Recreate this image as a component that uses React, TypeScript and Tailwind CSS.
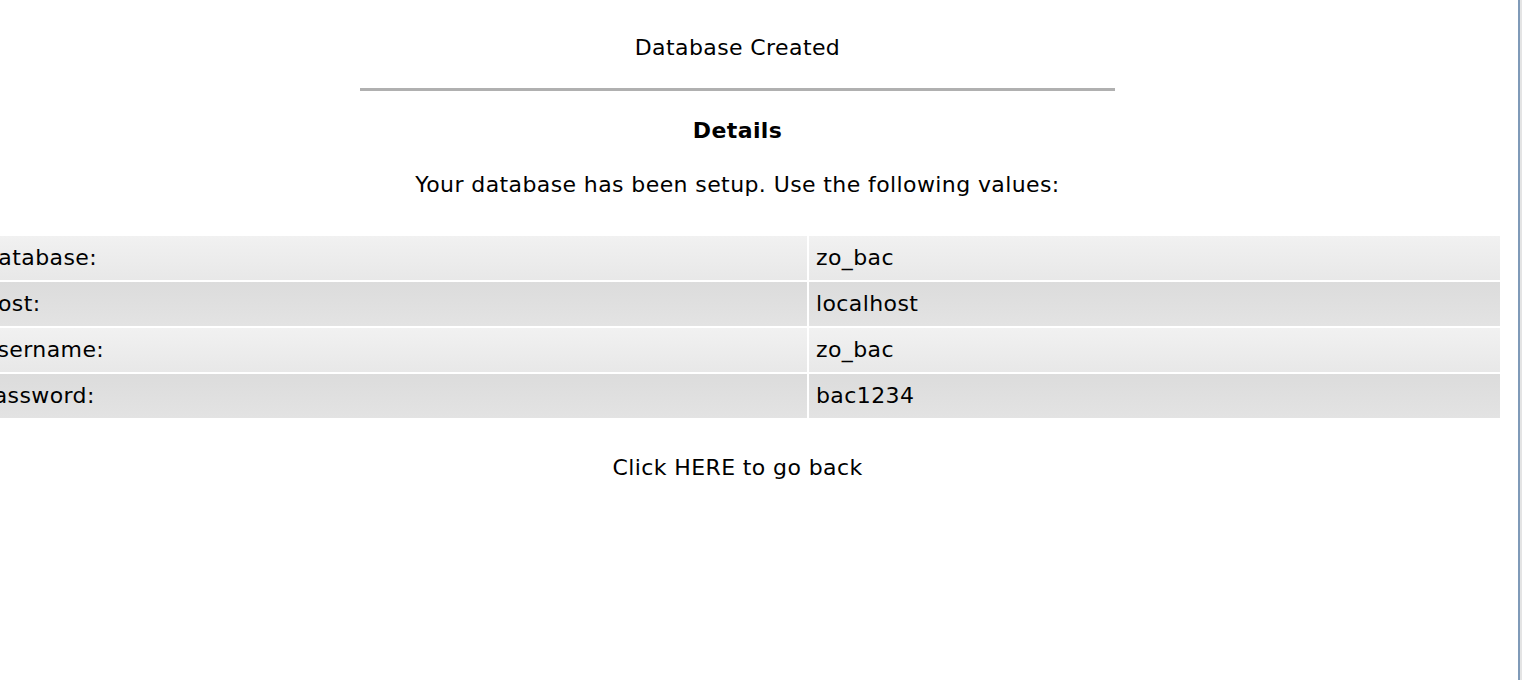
const rows = [
  { label: "Database:", value: "zo_bac" },
  { label: "Host:", value: "localhost" },
  { label: "Username:", value: "zo_bac" },
  { label: "Password:", value: "bac1234" },
];

export default function App() {
  return (
    <div className="flex h-[680px] w-full overflow-hidden bg-white font-['DejaVu_Sans',Verdana,sans-serif] text-[22px] tracking-[0.4px] text-black">
      <div className="min-w-0 flex-1 overflow-hidden">
        <div className="ml-[-22px] w-[1519px]">
          <div className="pt-[34px] text-center leading-[28px]">Database Created</div>
          <div className="mx-auto mt-[26px] h-[3px] w-[755px] bg-[#b0b0b0]" />
          <div className="mt-[26px] text-center font-bold leading-[28px]">Details</div>
          <div className="mt-[26px] text-center leading-[28px]">Your database has been setup. Use the following values:</div>
          <table className="mt-[35px] w-[calc(100%+5px)] border-separate border-spacing-[2px]">
            <tbody>
              {rows.map((row, i) => (
                <tr
                  key={row.label}
                  className={
                    i % 2 === 0
                      ? "bg-gradient-to-b from-[#f1f1f1] to-[#e8e8e8]"
                      : "bg-gradient-to-b from-[#dcdcdc] to-[#e3e3e3]"
                  }
                >
                  <td className="h-[44px] w-[827px] pl-[1px] pr-[6px] text-left align-middle leading-[28px]">{row.label}</td>
                  <td className="h-[44px] pl-[7px] pr-[6px] text-left align-middle leading-[28px]">{row.value}</td>
                </tr>
              ))}
            </tbody>
          </table>
          <div className="mt-[34px] text-center leading-[28px]">Click HERE to go back</div>
        </div>
      </div>
      <div className="w-[2px] shrink-0 bg-[#7f9ab8]" />
      <div className="w-[2px] shrink-0 bg-[#e4e4e4]" />
    </div>
  );
}
